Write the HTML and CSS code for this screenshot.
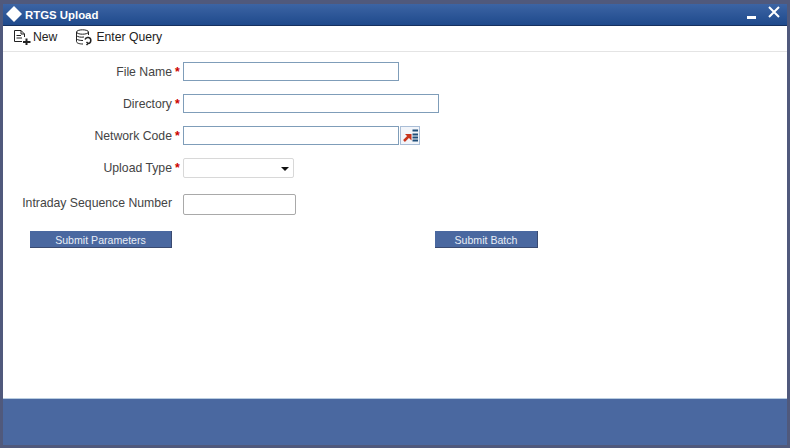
FILE: index.html
```html
<!DOCTYPE html>
<html lang="en">
<head>
  <meta charset="UTF-8" />
  <title>RTGS Upload</title>
  <link rel="stylesheet" href="styles.css">
</head>
<body>
  <div class="window">
    <div class="title-bar">
      <svg class="title-icon" width="16" height="16" viewBox="0 0 16 16"><path d="M8 0 16 8 8 16 0 8Z" fill="#fff"/></svg>
      <span class="title-text">RTGS Upload</span>
      <span class="title-min"></span>
      <svg class="title-close" width="12" height="12" viewBox="0 0 12 12"><path d="M1 1 11 11M11 1 1 11" stroke="#fff" stroke-width="2" fill="none"/></svg>
    </div>

    <div class="toolbar">
      <div class="tool">
        <svg width="19" height="17" viewBox="0 0 19 17" fill="none" stroke="#222" stroke-width="1"><path d="M1.500 12.500V1.500H8L11.500 5V8M8 1.500V5H11.500M3.500 6.500H8M3.500 9H9M1.500 12.500H9"/><path d="M13.500 9.500V16M10 13H17.500" stroke-width="2"/></svg>
        <span>New</span>
      </div>
      <div class="tool tool-query">
        <svg width="17" height="17" viewBox="0 0 17 17" fill="none" stroke="#222" stroke-width="1"><ellipse cx="7.500" cy="3" rx="6" ry="2.200"/><path d="M1.500 3V12.500C1.500 14 4 15 8 15M13.500 3V6M1.500 6.500C2.500 8 6 8.500 9 8M1.500 9.800C2.500 11 5 11.500 8 11.500"/><path d="M10 10.500A3 3 0 1 1 13 14.500M13 14.500 11.500 13M13 14.500 11.500 16" stroke-width="1.500"/></svg>
        <span>Enter Query</span>
      </div>
    </div>

    <form class="form-content">
      <div class="form-row">
        <label class="form-label">File Name</label><span class="req">*</span>
        <input type="text" class="form-input input-name">
      </div>
      <div class="form-row">
        <label class="form-label">Directory</label><span class="req">*</span>
        <input type="text" class="form-input input-dir">
      </div>
      <div class="form-row">
        <label class="form-label">Network Code</label><span class="req">*</span>
        <input type="text" class="form-input input-name">
        <span class="lov-button">
          <svg width="17" height="15" viewBox="0 0 17 15"><path d="M2 13 7 8" stroke="#c8341c" stroke-width="2.500" fill="none"/><path d="M3 6H9.500V12.500Z" fill="#c8341c"/><path d="M10.500 2.500H16M10.500 6.500H16M10.500 9.500H16M10.500 12.500H16" stroke="#1f4e79" stroke-width="2"/></svg>
        </span>
      </div>
      <div class="form-row row-type">
        <label class="form-label">Upload Type</label><span class="req">*</span>
        <div class="form-select"><span class="select-arrow"></span></div>
      </div>
      <div class="form-row row-seq">
        <label class="form-label">Intraday Sequence Number</label><span class="req"></span>
        <input type="text" class="form-input input-seq">
      </div>
      <div class="button-row">
        <button type="button" class="submit-button button-params">Submit Parameters</button>
        <button type="button" class="submit-button button-batch">Submit Batch</button>
      </div>
    </form>

    <div class="footer"></div>
  </div>
</body>
</html>
```

FILE: styles.css
```css
* { margin: 0; padding: 0; box-sizing: border-box; }

:root {
  --frame: #50597c;
  --blue: #4a68a0;
  --input-border: #7f9db9;
}

html, body {
  width: 790px;
  height: 448px;
  overflow: hidden;
}

body {
  font-family: "Liberation Sans", Arial, sans-serif;
  background: var(--frame);
  padding: 4px 3px 3px;
}

.window {
  display: flex;
  flex-direction: column;
  height: 441px;
  background: white;
}

.title-bar {
  display: flex;
  align-items: center;
  height: 22px;
  flex-shrink: 0;
  padding-left: 3px;
  background: linear-gradient(#3c64a4, #1f4a8c);
  border-bottom: 1px solid #16305f;
}

.title-icon {
  margin: -1px 3px 0 0;
}

.title-text {
  flex: 1;
  padding-top: 1px;
  color: white;
  font-size: 11.4px;
  font-weight: bold;
}

.title-min {
  width: 9px;
  height: 3px;
  margin: 5px 12px 0 0;
  background: white;
}

.title-close {
  margin: -5px 7px 0 0;
}

.toolbar {
  display: flex;
  align-items: center;
  height: 26px;
  flex-shrink: 0;
  padding: 0 0 3px 10px;
  border-bottom: 1px solid #e4e4e4;
  font-size: 12.2px;
  color: #222;
}

.tool {
  display: flex;
  align-items: center;
  gap: 1px;
  margin-right: 18px;
}

.tool-query {
  gap: 4px;
}

.form-content {
  flex: 1;
  padding-top: 10px;
  font-size: 12.25px;
}

.form-row {
  display: flex;
  align-items: center;
  height: 19px;
  margin-bottom: 13px;
}

.row-type {
  height: 20px;
  margin-bottom: 16px;
}

.row-seq {
  height: 21px;
  margin-bottom: 16px;
}

.form-label {
  width: 169px;
  text-align: right;
  color: #444;
}

.row-seq .form-label {
  padding-bottom: 4px;
}

.req {
  width: 11px;
  padding-left: 3px;
  color: #c00;
  font-weight: bold;
}

.form-input {
  height: 19px;
  border: 1px solid var(--input-border);
  background: white;
}

.input-name { width: 216px; }
.input-dir { width: 256px; }

.input-seq {
  width: 113px;
  height: 21px;
  border: 1px solid #a9a9a9;
  border-radius: 2px;
}

.lov-button {
  display: flex;
  align-items: center;
  justify-content: center;
  width: 20px;
  height: 19px;
  margin-left: 1px;
  background: #f2f5fa;
  border: 1px solid #a9bdd6;
}

.form-select {
  position: relative;
  width: 111px;
  height: 20px;
  border: 1px solid #d8d8d8;
  border-radius: 2px;
}

.select-arrow {
  position: absolute;
  top: 8px;
  right: 4px;
  border-top: 4px solid #111;
  border-left: 4px solid transparent;
  border-right: 4px solid transparent;
}

.button-row {
  display: flex;
  padding-left: 27px;
}

.submit-button {
  height: 17px;
  padding-top: 2px;
  background: var(--blue);
  color: #e8edf6;
  border: none;
  border-right: 1px solid #3a4a70;
  border-bottom: 1px solid #3a4a70;
  font-family: inherit;
  font-size: 10.6px;
}

.button-params {
  width: 142px;
  margin-right: 263px;
}

.button-batch {
  width: 103px;
}

.footer {
  height: 47px;
  flex-shrink: 0;
  background: var(--blue);
  border-top: 1px solid #b8cce0;
}
```
